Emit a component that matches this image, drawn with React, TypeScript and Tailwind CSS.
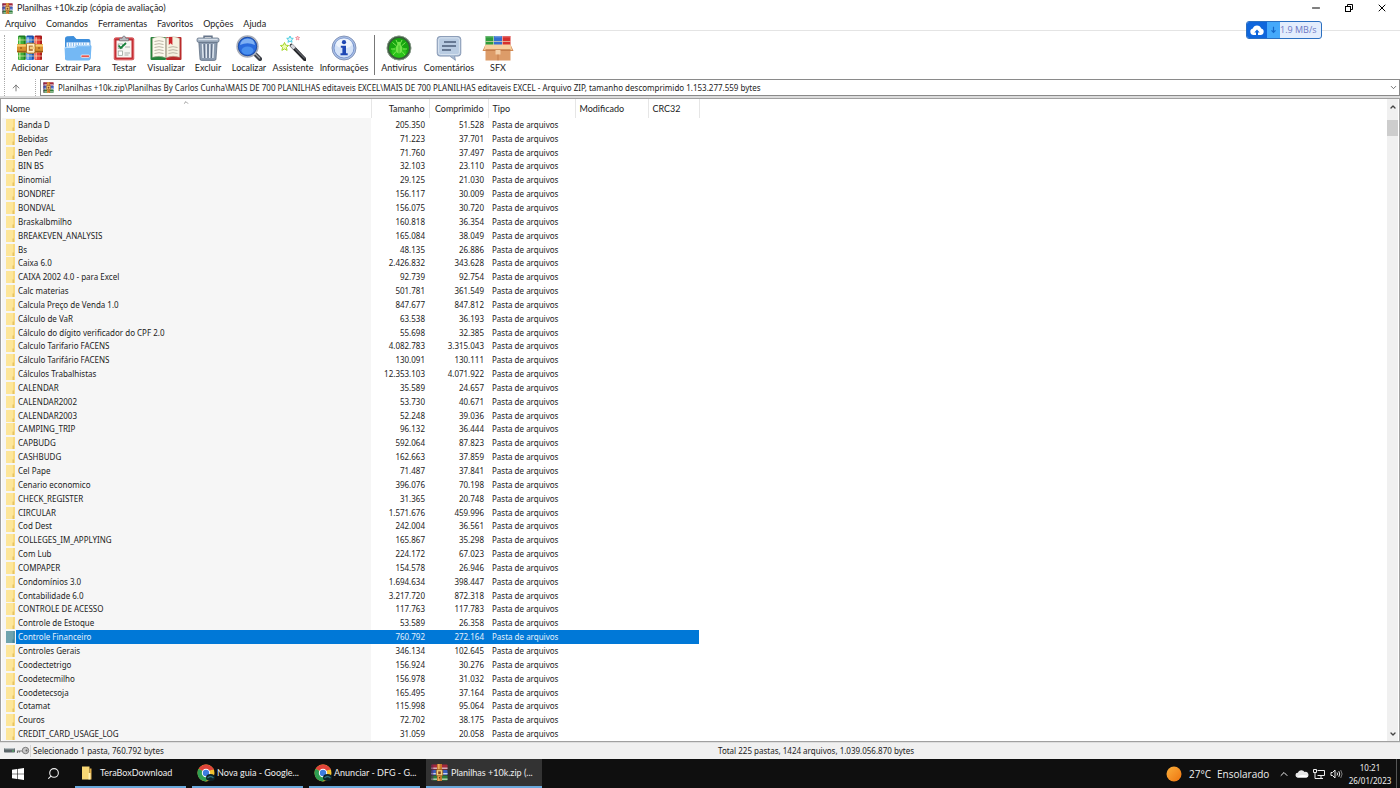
import React from "react";
import { ArrowUp, ChevronDown, ChevronUp, Minus, Search, X } from "lucide-react";

type Row = [string, string, string];

const rows: Row[] = [
  ["Banda D", "205.350", "51.528"],
  ["Bebidas", "71.223", "37.701"],
  ["Ben Pedr", "71.760", "37.497"],
  ["BIN BS", "32.103", "23.110"],
  ["Binomial", "29.125", "21.030"],
  ["BONDREF", "156.117", "30.009"],
  ["BONDVAL", "156.075", "30.720"],
  ["Braskalbmilho", "160.818", "36.354"],
  ["BREAKEVEN_ANALYSIS", "165.084", "38.049"],
  ["Bs", "48.135", "26.886"],
  ["Caixa 6.0", "2.426.832", "343.628"],
  ["CAIXA 2002 4.0 - para Excel", "92.739", "92.754"],
  ["Calc materias", "501.781", "361.549"],
  ["Calcula Preço de Venda 1.0", "847.677", "847.812"],
  ["Cálculo de VaR", "63.538", "36.193"],
  ["Cálculo do dígito verificador do CPF 2.0", "55.698", "32.385"],
  ["Calculo Tarifario FACENS", "4.082.783", "3.315.043"],
  ["Cálculo Tarifário FACENS", "130.091", "130.111"],
  ["Cálculos Trabalhistas", "12.353.103", "4.071.922"],
  ["CALENDAR", "35.589", "24.657"],
  ["CALENDAR2002", "53.730", "40.671"],
  ["CALENDAR2003", "52.248", "39.036"],
  ["CAMPING_TRIP", "96.132", "36.444"],
  ["CAPBUDG", "592.064", "87.823"],
  ["CASHBUDG", "162.663", "37.859"],
  ["Cel Pape", "71.487", "37.841"],
  ["Cenario economico", "396.076", "70.198"],
  ["CHECK_REGISTER", "31.365", "20.748"],
  ["CIRCULAR", "1.571.676", "459.996"],
  ["Cod Dest", "242.004", "36.561"],
  ["COLLEGES_IM_APPLYING", "165.867", "35.298"],
  ["Com Lub", "224.172", "67.023"],
  ["COMPAPER", "154.578", "26.946"],
  ["Condomínios 3.0", "1.694.634", "398.447"],
  ["Contabilidade 6.0", "3.217.720", "872.318"],
  ["CONTROLE DE ACESSO", "117.763", "117.783"],
  ["Controle de Estoque", "53.589", "26.358"],
  ["Controle Financeiro", "760.792", "272.164"],
  ["Controles Gerais", "346.134", "102.645"],
  ["Coodectetrigo", "156.924", "30.276"],
  ["Coodetecmilho", "156.978", "31.032"],
  ["Coodetecsoja", "165.495", "37.164"],
  ["Cotamat", "115.998", "95.064"],
  ["Couros", "72.702", "38.175"],
  ["CREDIT_CARD_USAGE_LOG", "31.059", "20.058"],
];

const SELECTED = "Controle Financeiro";

function WinRarIcon({ className }: { className: string }) {
  return (
    <svg viewBox="0 0 18 18" className={className} aria-hidden="true">
      <rect x="0.5" y="0.5" width="17" height="5.4" rx="0.8" fill="#a3283c" />
      <rect x="0.5" y="3.8" width="17" height="1.3" fill="#dcc9d6" />
      <rect x="0.5" y="6.3" width="17" height="5.4" rx="0.8" fill="#3a5fc0" />
      <rect x="0.5" y="9.6" width="17" height="1.3" fill="#cfd9f2" />
      <rect x="0.5" y="12.1" width="17" height="5.4" rx="0.8" fill="#2e7d3a" />
      <rect x="0.5" y="15.4" width="17" height="1.3" fill="#c9e2c5" />
      <rect x="0.5" y="0.5" width="2" height="17" fill="#5b2052" opacity="0.55" />
      <rect x="6.4" y="0" width="5.2" height="18" fill="#c9792b" />
      <rect x="7.6" y="0" width="1.4" height="18" fill="#f0b766" />
      <rect x="5.6" y="6" width="6.8" height="6.4" rx="1" fill="#f4d27a" stroke="#8a4b17" strokeWidth="0.8" />
      <rect x="7.6" y="7.8" width="2.8" height="3" fill="#8a3f1d" />
      <circle cx="9" cy="14.6" r="0.8" fill="#5a2b0d" />
    </svg>
  );
}

function BooksIcon() {
  const books = [
    ["#3fae3a", "#1d7a25", "#8fe07c"],
    ["#3f86e0", "#1c4fa8", "#9cc8fa"],
    ["#e3403a", "#a81a1c", "#f79a8c"],
  ];
  return (
    <svg viewBox="0 0 26 26" className="size-[26px]" aria-hidden="true">
      {books.map(([main, dark, light], i) => (
        <g key={main}>
          <rect x={1 + i * 8.2} y="1" width="7.6" height="24" rx="1" fill={main} />
          <rect x={6.8 + i * 8.2} y="1.5" width="1.8" height="23" fill={dark} />
          <rect x={2 + i * 8.2} y="1.5" width="1.6" height="23" fill={light} />
          <rect x={1.4 + i * 8.2} y="0.4" width="7" height="1.8" rx="0.8" fill={dark} />
          <rect x={1 + i * 8.2} y="4.5" width="7.6" height="1" fill="#f1e7b4" opacity="0.7" />
          <rect x={1 + i * 8.2} y="20.5" width="7.6" height="1" fill="#f1e7b4" opacity="0.7" />
        </g>
      ))}
      <rect x="0" y="9" width="26" height="8.4" rx="0.8" fill="#d9912e" />
      <rect x="0" y="9.6" width="26" height="2" fill="#f8cf72" />
      <rect x="0" y="15.8" width="26" height="1.4" fill="#9c5a14" />
      <rect x="9.4" y="8.2" width="8.6" height="10" rx="1.4" fill="#fff1c4" stroke="#a86a1c" strokeWidth="1" />
      <rect x="11.8" y="10.6" width="4" height="5.2" fill="#b06a28" />
      <rect x="12.8" y="11.6" width="4.8" height="2.6" fill="#f3ce85" />
      <circle cx="4" cy="13" r="0.8" fill="#7a430e" />
      <circle cx="22" cy="13" r="0.8" fill="#7a430e" />
    </svg>
  );
}

function ExtractIcon() {
  return (
    <svg viewBox="0 0 28 26" className="h-[26px] w-[28px]" aria-hidden="true">
      <path d="M1 23V3.6Q1 1.4 3.2 1.2L9.6 1l2.8 3h12q2 0 2 2v17q0 2-2 2H3q-2 0-2-2z" fill="#3e8fdc" />
      <path d="M2.500 7.400h23v8h-23z" fill="#f3f9ff" />
      <path d="M4.500 7.400v4M7 7.400v4M9.500 7.400v4M12 7.400v4M14.500 7.400v4M17 7.400v4M19.500 7.400v4M22 7.400v4" stroke="#7db6ec" strokeWidth="0.9" />
      <path d="M0.600 13.200q0-1.400 1.400-1.400h8.600l2.400-1.800h13q1.500 0 1.500 1.500L26.600 23.500q-.2 1.900-2.200 1.900H3.200q-2 0-2.100-1.900z" fill="#74b8f4" />
      <path d="M1.200 13.500q0-1 1-1h8.700l2.400-1.800h12.500" fill="none" stroke="#c3e2fc" strokeWidth="1" />
      <rect x="17" y="20" width="8.500" height="2.400" rx="1" fill="#e5483f" stroke="#fff" strokeWidth="0.7" />
    </svg>
  );
}

function TestIcon() {
  return (
    <svg viewBox="0 0 22 26" className="h-[26px] w-[22px]" aria-hidden="true">
      <rect x="0.800" y="2.500" width="20.400" height="22.700" rx="2" fill="#c22f35" />
      <rect x="1.500" y="3" width="19" height="21.500" rx="1.500" fill="none" stroke="#e87778" strokeWidth="0.700" />
      <rect x="3.500" y="5.500" width="15" height="17" fill="#f6f6f2" />
      <path d="M6.500 5.800V3.200h2.700q.4-2.200 1.800-2.200t1.800 2.200h2.700v2.600z" fill="#b9bcc0" stroke="#6c6f75" strokeWidth="0.700" />
      <rect x="5.200" y="9" width="4.300" height="4.300" fill="#fff" stroke="#8b9990" strokeWidth="0.700" />
      <rect x="5.200" y="16" width="4.300" height="4.300" fill="#fff" stroke="#8b9990" strokeWidth="0.700" />
      <path d="M5.600 10.500l2.200 2.400L13 8" fill="none" stroke="#16803a" strokeWidth="1.800" />
      <path d="M12 12h5M11.500 18h5.500M11.500 20h4" stroke="#a5a9a5" strokeWidth="0.900" />
    </svg>
  );
}

function ViewIcon() {
  return (
    <svg viewBox="0 0 32 26" className="h-[26px] w-[32px]" aria-hidden="true">
      <rect x="0.500" y="2" width="15.500" height="23" rx="1" fill="#27833b" />
      <rect x="16" y="2" width="15.500" height="23" rx="1" fill="#b92b2b" />
      <path d="M2.500 3.500Q9-.2 16 3.500v19.200Q9 20 2.500 22.200z" fill="#fbf8ec" stroke="#b8b29c" strokeWidth="0.500" />
      <path d="M29.500 3.500Q23-.2 16 3.500v19.200q7-2.700 13.500-.5z" fill="#f5f1df" stroke="#b8b29c" strokeWidth="0.500" />
      <path d="M4.500 6.500q4.500-1.600 9 0M4.500 9.500q4.500-1.600 9 0M4.500 12.500q4.500-1.600 9 0M4.500 15.500q4.500-1.600 9 0M4.500 18.500q4.500-1.600 9 0M18.500 12.500q4.500-1.600 9 0M18.500 15.500q4.500-1.600 9 0M18.500 18.500q4.500-1.600 9 0" fill="none" stroke="#b3ae9c" strokeWidth="0.900" />
      <path d="M18.800 2h3.600v8l-1.800-1.800L18.800 10z" fill="#cc2429" />
      <path d="M16 3.500v19" stroke="#8f8a76" strokeWidth="0.900" />
    </svg>
  );
}

function TrashIcon() {
  return (
    <svg viewBox="0 0 24 26" className="h-[26px] w-[24px]" aria-hidden="true">
      <path d="M8 3.500V1.200h8v2.300" fill="none" stroke="#66758a" strokeWidth="1.400" />
      <path d="M2.800 7h18.400L20 24q-.1 1.400-1.500 1.400h-13Q4.100 25.400 4 24z" fill="#8a9aae" stroke="#56657a" strokeWidth="0.700" />
      <path d="M6.500 9l.6 14M10.200 9l.2 14M13.800 9l-.2 14M17.500 9l-.6 14" stroke="#e4ebf3" strokeWidth="1.400" />
      <path d="M8.200 9l.4 14M12 9v14M15.800 9l-.4 14" stroke="#52617a" strokeWidth="0.800" />
      <rect x="1" y="3" width="22" height="4.200" rx="1.500" fill="#a7b5c6" stroke="#56657a" strokeWidth="0.700" />
      <rect x="2.500" y="3.800" width="19" height="1" fill="#e6edf5" />
    </svg>
  );
}

function FindIcon() {
  return (
    <svg viewBox="0 0 26 26" className="size-[26px]" aria-hidden="true">
      <path d="M18.500 18.500l5.500 5.500" stroke="#3c3f46" strokeWidth="4.200" strokeLinecap="round" />
      <path d="M18.500 18l5 5" stroke="#9b9fa8" strokeWidth="1.200" strokeLinecap="round" />
      <circle cx="11.500" cy="11.500" r="10.300" fill="#1e5fd0" stroke="#a8adb8" strokeWidth="1.800" />
      <circle cx="11.500" cy="11.500" r="9.200" fill="#2a6bdd" stroke="#173f91" strokeWidth="0.700" />
      <ellipse cx="11.500" cy="15.500" rx="6" ry="4" fill="#57a0f6" opacity="0.700" />
      <path d="M4 10Q5 3.800 11.500 3.600T19 10Q11.500 6.500 4 10z" fill="#8dbcf7" opacity="0.850" />
    </svg>
  );
}

function WizardIcon() {
  const star = "M0-4l1.200 2.700 2.900.3-2.200 2 .7 2.900L0 2.400l-2.600 1.500.7-2.900-2.200-2 2.900-.3z";
  return (
    <svg viewBox="0 0 26 26" className="size-[26px]" aria-hidden="true">
      <path d={star} transform="translate(4.500 11.500)" fill="#f0fbb8" stroke="#a6d82c" strokeWidth="1" />
      <path d={star} transform="translate(10 4.200) scale(.8)" fill="#d8f9fc" stroke="#49cbe0" strokeWidth="1.200" />
      <path d={star} transform="translate(17.600 3) scale(.5)" fill="#ffdede" stroke="#ee7d8c" strokeWidth="1.500" />
      <path d="M11.500 10.500L25 24.500" stroke="#26272b" strokeWidth="3.600" strokeLinecap="round" />
      <path d="M12 10.500L25 23.600" stroke="#83868e" strokeWidth="1" />
      <path d="M11.200 10l3.300 3.400" stroke="#d4d6dc" strokeWidth="3.200" />
    </svg>
  );
}

function InfoIcon() {
  return (
    <svg viewBox="0 0 26 26" className="size-[26px]" aria-hidden="true">
      <circle cx="13" cy="13" r="12" fill="#a9bfe6" stroke="#7587ac" strokeWidth="0.800" />
      <circle cx="13" cy="13" r="10" fill="#d5e3f8" stroke="#5b7cc0" strokeWidth="0.700" />
      <ellipse cx="13" cy="8.500" rx="8" ry="5" fill="#fff" opacity="0.600" />
      <circle cx="13" cy="7.200" r="2.100" fill="#1e47b4" />
      <path d="M9.800 10.800h5.200v7.400h1.700v2H9.500v-2h1.900v-5.400H9.800z" fill="#1e47b4" />
    </svg>
  );
}

function VirusIcon() {
  return (
    <svg viewBox="0 0 26 26" className="size-[26px]" aria-hidden="true">
      <circle cx="13" cy="13" r="12.200" fill="#3c5a3f" />
      <circle cx="13" cy="13" r="12" fill="none" stroke="#92a592" strokeWidth="0.800" />
      <circle cx="13" cy="13" r="10" fill="#17a50f" />
      <ellipse cx="13" cy="17" rx="7.500" ry="5.500" fill="#37d61f" opacity="0.600" />
      <g stroke="#7fe855" strokeWidth="1" fill="none">
        <path d="M10 10.500L6.500 7.500M16 10.500l3.500-3M9 14H5M17 14h4M10 16.500L7 20M16 16.500l3 3.500M11.500 8L10 5M14.500 8L16 5" />
      </g>
      <ellipse cx="13" cy="14" rx="3.300" ry="4.400" fill="#74e34c" />
      <circle cx="13" cy="8.800" r="2" fill="#74e34c" />
      <path d="M13 10.500v8" stroke="#2cae1c" strokeWidth="0.700" />
    </svg>
  );
}

function CommentIcon() {
  return (
    <svg viewBox="0 0 26 26" className="size-[26px]" aria-hidden="true">
      <path d="M4 1.500h18q2.800 0 2.800 2.800v14q0 2.800-2.800 2.800h-3.400l.8 4.200-5.600-4.200H4q-2.800 0-2.800-2.800v-14Q1.200 1.500 4 1.500z" fill="#a5b8d0" stroke="#8496b2" strokeWidth="0.900" />
      <rect x="2.600" y="2.800" width="20.800" height="16.800" rx="2" fill="#b9cce2" stroke="#dfe9f4" strokeWidth="0.900" />
      <path d="M8 7h12M6 11h14M6 15h9" stroke="#4c5d7a" strokeWidth="1.300" />
    </svg>
  );
}

function SfxIcon() {
  return (
    <svg viewBox="0 0 32 26" className="h-[26px] w-[32px]" aria-hidden="true">
      <rect x="3.500" y="1" width="8" height="11" fill="#2f9c3b" />
      <rect x="12" y="1" width="8" height="11" fill="#346fd0" />
      <rect x="20.500" y="1" width="8" height="11" fill="#d5302e" />
      <path d="M4 1.800h7M12.500 1.800h7M21 1.800h7" stroke="#fff" strokeWidth="0.800" opacity="0.500" />
      <path d="M3.500 6.500h25" stroke="#e8d9b5" strokeWidth="1" opacity="0.700" />
      <path d="M3.500 9.500L.5 16h3.500zM28.500 9.500l3 6.500H28z" fill="#d18a54" />
      <path d="M3.500 9.500h25L30 15H2z" fill="#f7cf9f" />
      <rect x="3.500" y="14.500" width="25" height="11" fill="#dd9c69" />
      <rect x="3.500" y="14.500" width="25" height="1.200" fill="#b9713f" />
      <path d="M13.500 15v4.500h5V15z" fill="#f3cfa8" />
      <path d="M16 19.500v6" stroke="#b9713f" strokeWidth="0.700" />
    </svg>
  );
}

function FolderIcon({ selected }: { selected: boolean }) {
  return (
    <svg viewBox="0 0 9 12" className="h-3 w-[9px] shrink-0" aria-hidden="true">
      <rect width="9" height="12" fill={selected ? "#6fa3ad" : "#fde69a"} />
      <path d="M7 0h2v12H7z" fill={selected ? "#5d97a8" : "#f9da80"} />
      <path d="M6.500 8.500H8V12H6.500z" fill={selected ? "#4c8496" : "#e6c263"} />
    </svg>
  );
}

function ChromeIcon() {
  return (
    <svg viewBox="0 0 18 18" className="size-[18px] shrink-0" aria-hidden="true">
      <circle cx="9" cy="9" r="8.500" fill="#f2c230" />
      <path d="M9 9L1.640 4.750A8.500 8.500 0 0 1 16.360 4.750z" fill="#e0443a" />
      <path d="M9 9L1.640 4.750A8.500 8.500 0 0 0 9 17.500l3-5z" fill="#2f9e52" />
      <path d="M9 5h7.500" stroke="#e0443a" strokeWidth="1.500" />
      <circle cx="9" cy="9" r="4.200" fill="#fff" />
      <circle cx="9" cy="9" r="3.200" fill="#3e7de0" />
      <ellipse cx="13.500" cy="13.500" rx="4.500" ry="3.500" fill="#0d2328" />
      <path d="M10.500 14q3-3 6 0" fill="none" stroke="#2f6f7a" strokeWidth="1.200" />
    </svg>
  );
}

const tools: { label: string; width: string; icon: React.ReactNode }[] = [
  { label: "Adicionar", width: "w-11", icon: <BooksIcon /> },
  { label: "Extrair Para", width: "w-[52px]", icon: <ExtractIcon /> },
  { label: "Testar", width: "w-10", icon: <TestIcon /> },
  { label: "Visualizar", width: "w-11", icon: <ViewIcon /> },
  { label: "Excluir", width: "w-10", icon: <TrashIcon /> },
  { label: "Localizar", width: "w-[42px]", icon: <FindIcon /> },
  { label: "Assistente", width: "w-[46px]", icon: <WizardIcon /> },
  { label: "Informações", width: "w-14", icon: <InfoIcon /> },
];

const extraTools: typeof tools = [
  { label: "Antivírus", width: "w-[46px]", icon: <VirusIcon /> },
  { label: "Comentários", width: "w-[54px]", icon: <CommentIcon /> },
  { label: "SFX", width: "w-11", icon: <SfxIcon /> },
];

function ToolButton({ label, width, icon }: (typeof tools)[number]) {
  return (
    <button type="button" className={`flex ${width} flex-col items-center whitespace-nowrap`}>
      {icon}
      <span className="leading-[14px]">{label}</span>
    </button>
  );
}

function TitleBar() {
  return (
    <header className="flex h-4 items-center pl-[2px]">
      <WinRarIcon className="size-[11px]" />
      <h1 className="ml-1">Planilhas +10k.zip (cópia de avaliação)</h1>
      <div className="ml-auto flex items-center gap-[21px] pr-3 text-black">
        <button type="button" aria-label="Minimizar">
          <Minus className="size-3" strokeWidth={2} />
        </button>
        <button type="button" aria-label="Restaurar">
          <svg viewBox="0 0 12 12" className="size-3" fill="none" stroke="currentColor" aria-hidden="true">
            <rect x="2.500" y="4.500" width="5" height="5" />
            <path d="M4.500 4.500v-2h5v5h-2" />
          </svg>
        </button>
        <button type="button" aria-label="Fechar">
          <X className="size-3" strokeWidth={2} />
        </button>
      </div>
    </header>
  );
}

function SpeedBadge() {
  return (
    <div className="absolute top-[21px] right-[78px] flex h-[18px] w-[76px] overflow-hidden rounded-[3px] border border-[#2b6fc0] bg-[#e3edfd] font-['Open_Sans',sans-serif]">
      <span className="flex w-5 items-center justify-center bg-[#0f66dc]">
        <svg viewBox="0 0 14 12" className="h-3 w-[14px]" aria-hidden="true">
          <path d="M3.500 11A3.300 3.300 0 0 1 2.800 4.500 4.400 4.400 0 0 1 11.200 4.500 3.300 3.300 0 0 1 10.500 11z" fill="#fff" />
          <path d="M7 5.500l2.700 2.900H8V12H6V8.400H4.300z" fill="#0f66dc" />
        </svg>
      </span>
      <span className="flex w-[13px] items-center justify-center bg-[#45a9fb]">
        <svg viewBox="0 0 8 10" className="h-2 w-[7px]" aria-hidden="true">
          <path d="M4 1v7M1.500 5.500L4 8l2.500-2.500" fill="none" stroke="#1668c9" strokeWidth="1.500" />
        </svg>
      </span>
      <span className="flex items-center text-[9px] text-[#6d78c4]">1.9 MB/s</span>
    </div>
  );
}

function FileTable() {
  return (
    <table className="h-full w-[697px] table-fixed border-collapse text-left leading-3">
      <colgroup>
        <col className="w-[369px]" />
        <col className="w-[58px]" />
        <col className="w-[59px]" />
        <col className="w-[87px]" />
        <col className="w-[73px]" />
        <col className="w-[51px]" />
      </colgroup>
      <thead>
        <tr className="h-[19px] *:border-r *:border-[#e6e6e6] *:p-0 *:font-normal">
          <th scope="col" className="relative">
            <span className="pl-1">Nome</span>
            <ChevronUp className="absolute top-0 left-1/2 size-[7px] -translate-x-1/2 text-[#555]" strokeWidth={2} />
          </th>
          <th scope="col" className="text-right">
            <span className="pr-1">Tamanho</span>
          </th>
          <th scope="col" className="text-right">
            <span className="pr-1">Comprimido</span>
          </th>
          <th scope="col">
            <span className="pl-1">Tipo</span>
          </th>
          <th scope="col">
            <span className="pl-1">Modificado</span>
          </th>
          <th scope="col">
            <span className="pl-1">CRC32</span>
          </th>
        </tr>
      </thead>
      <tbody className="font-['Noto_Sans',sans-serif] text-[8px]">
        {rows.map(([name, size, packed]) => {
          const selected = name === SELECTED;
          return (
            <tr
              key={name}
              aria-selected={selected}
              className={
                selected
                  ? "bg-[#0078d7] text-[#e4f1fc] *:p-0 *:first:bg-linear-to-r *:first:from-[#f6f6f6] *:first:from-[14px] *:first:to-[#0078d7] *:first:to-[14px]"
                  : "*:p-0 *:first:bg-[#f6f6f6]"
              }
            >
              <td>
                <div className="flex items-center">
                  <span className="pl-1">
                    <FolderIcon selected={selected} />
                  </span>
                  <span className="pl-[3px] whitespace-nowrap">{name}</span>
                </div>
              </td>
              <td className="text-right">
                <span className="pr-1">{size}</span>
              </td>
              <td className="text-right">
                <span className="pr-1">{packed}</span>
              </td>
              <td>
                <span className="pl-1">Pasta de arquivos</span>
              </td>
              <td />
              <td />
            </tr>
          );
        })}
      </tbody>
    </table>
  );
}

function TaskButton({ label, icon, active }: { label: string; icon: React.ReactNode; active?: boolean }) {
  return (
    <button
      type="button"
      className={`flex items-center gap-[2px] border-b-2 border-[#6aa9dc] pl-[5px] whitespace-nowrap ${active ? "w-[116px] bg-[#333333]" : "w-[111px]"}`}
    >
      {icon}
      <span>{label}</span>
    </button>
  );
}

function Taskbar() {
  return (
    <footer className="flex h-[29px] shrink-0 bg-[#0f0f0f] text-[#eeeeee]">
      <button type="button" aria-label="Iniciar" className="flex w-[35px] items-center justify-center">
        <svg viewBox="0 0 12 12" className="size-3" fill="#fff" aria-hidden="true">
          <path d="M0 1.700l5-.7v4.700H0zM5.600.9L12 0v5.700H5.600zM0 6.300h5V11l-5-.7zM5.600 6.300H12V12l-6.400-.9z" />
        </svg>
      </button>
      <button type="button" aria-label="Pesquisar" className="flex w-10 items-center pl-3">
        <Search className="size-[13px] -scale-x-100" strokeWidth={2} />
      </button>
      <div className="flex gap-[6px]">
        <TaskButton
          label="TeraBoxDownload"
          icon={
            <svg viewBox="0 0 18 16" className="h-4 w-[18px] shrink-0" aria-hidden="true">
              <path d="M2 1.500h7.500v13H2z" fill="#f7d774" />
              <path d="M9.500 3.500h2v11h-2z" fill="#e3b04a" />
              <path d="M8.500 8h2v6.500h-2z" fill="#fff0b3" />
            </svg>
          }
        />
        <TaskButton label="Nova guia - Google..." icon={<ChromeIcon />} />
        <TaskButton label="Anunciar - DFG - G..." icon={<ChromeIcon />} />
        <TaskButton active label="Planilhas +10k.zip (..." icon={<WinRarIcon className="mr-px size-[17px]" />} />
      </div>
      <div className="ml-auto flex items-center">
        <svg viewBox="0 0 16 16" className="size-4" aria-hidden="true">
          <defs>
            <linearGradient id="sun" x1="0" y1="0" x2="1" y2="1">
              <stop offset="0" stopColor="#fbb03b" />
              <stop offset="1" stopColor="#ee7410" />
            </linearGradient>
          </defs>
          <circle cx="8" cy="8" r="7.500" fill="url(#sun)" />
        </svg>
        <span className="ml-[7px] font-['Open_Sans',sans-serif] text-[10px]">27°C</span>
        <span className="ml-[6px] w-[61px] font-['Open_Sans',sans-serif] text-[10px]">Ensolarado</span>
        <ChevronUp className="size-3" strokeWidth={2} />
        <svg viewBox="0 0 14 10" className="ml-[5px] h-[10px] w-[14px]" aria-hidden="true">
          <path d="M3 8.500a2.400 2.400 0 0 1-.2-4.800 3.800 3.800 0 0 1 6.800-.6 2.700 2.700 0 0 1 1.900 5.400z" fill="#e6e6e6" />
          <path d="M2 8.500q3-4 11-1.500-.5 1.500-2 1.500z" fill="#fff" />
        </svg>
        <svg viewBox="0 0 12 12" className="ml-1 size-3" fill="none" stroke="#eee" aria-hidden="true">
          <path d="M4.500 2.500h7v5h-7M8 7.500v3M5 10.500h5M.5 1.500h3v3h-3zM2 4.500v6h3" />
        </svg>
        <svg viewBox="0 0 14 12" className="ml-[5px] h-3 w-[14px]" fill="none" stroke="#eee" aria-hidden="true">
          <path d="M1 4.500h1.500L5 2v8L2.500 7.500H1z" />
          <path d="M7 4.500q1 1.500 0 3M8.800 3.200q1.900 2.800 0 5.600" />
          <path d="M10.700 2q2.800 4 0 8" opacity="0.500" />
        </svg>
        <div className="ml-1 w-11 text-center font-['Noto_Sans',sans-serif] text-[8px] leading-[13px]">
          <div>10:21</div>
          <div>26/01/2023</div>
        </div>
        <span className="ml-1 h-full w-1 border-l border-[#555]" />
      </div>
    </footer>
  );
}

export default function App() {
  return (
    <div className="relative flex h-screen min-h-[780px] flex-col overflow-hidden bg-white font-['Lato','Open_Sans',sans-serif] text-[9px] leading-3 text-[#1c1c1c]">
      <TitleBar />
      <SpeedBadge />
      <nav className="flex h-[15px] items-end gap-[10px] border-b border-[#e4e4e4] pl-[5px]">
        {["Arquivo", "Comandos", "Ferramentas", "Favoritos", "Opções", "Ajuda"].map((item) => (
          <button key={item} type="button">
            {item}
          </button>
        ))}
      </nav>
      <div className="flex h-12 pt-1 pl-1">
        <div className="mr-[3px] border-l border-dotted border-[#aaa]" />
        {tools.map((tool) => (
          <ToolButton key={tool.label} {...tool} />
        ))}
        <div className="mr-px mb-1 ml-[2px] border-l border-[#777]" />
        {extraTools.map((tool) => (
          <ToolButton key={tool.label} {...tool} />
        ))}
      </div>
      <div className="flex h-[17px] pl-1">
        <div className="flex w-8 border-x border-dotted border-[#aaa]">
          <button type="button" aria-label="Pasta acima" className="pl-[6px] text-[#666]">
            <ArrowUp className="size-[10px]" strokeWidth={2} />
          </button>
        </div>
        <div className="ml-1 flex flex-1 items-center border border-[#8a8a8a] pl-[2px]">
          <WinRarIcon className="size-[11px] shrink-0" />
          <input
            type="text"
            aria-label="Endereço"
            className="ml-1 h-full min-w-0 flex-1 font-['Noto_Sans',sans-serif] text-[8px] outline-none"
            defaultValue="Planilhas +10k.zip\Planilhas By Carlos Cunha\MAIS DE 700 PLANILHAS editaveis EXCEL\MAIS DE 700 PLANILHAS editaveis EXCEL - Arquivo ZIP, tamanho descomprimido 1.153.277.559 bytes"
          />
          <button type="button" aria-label="Histórico" className="pr-[1px] text-[#444]">
            <ChevronDown className="size-[9px]" strokeWidth={2} />
          </button>
        </div>
      </div>
      <div className="h-[3px] shrink-0 border-b border-[#a0a0a0] bg-[#dcdcdc]" />
      <main className="flex min-h-0 flex-1 border-x border-b border-[#a0a0a0] pl-[1px]">
        <div className="min-w-0 flex-1">
          <FileTable />
        </div>
        <div className="mr-[1px] flex w-[11px] flex-col items-center bg-[#f0f0f0] text-[#444]">
          <button type="button" aria-label="Rolar para cima" className="flex h-[21px] items-start pt-1">
            <ChevronUp className="size-2" strokeWidth={4} />
          </button>
          <div className="h-4 w-full bg-[#cdcdcd]" />
          <button type="button" aria-label="Rolar para baixo" className="mt-auto pb-[3px]">
            <ChevronDown className="size-2" strokeWidth={4} />
          </button>
        </div>
      </main>
      <div className="flex h-[17px] shrink-0 items-center border-t border-[#dedede] bg-[#f0f0f0] pl-1 font-['Noto_Sans',sans-serif] text-[8px]">
        <svg viewBox="0 0 26 10" className="h-[10px] w-[26px]" aria-hidden="true">
          <rect x="0" y="2" width="11" height="4.500" rx="0.800" fill="#5b6569" />
          <rect x="0.500" y="2" width="10" height="1.300" fill="#b6bfc2" />
          <rect x="8" y="4.500" width="2" height="1" fill="#58c26a" />
          <circle cx="21.500" cy="4.500" r="3.200" fill="#c9c9c9" stroke="#777" />
          <circle cx="22.500" cy="4.500" r="1" fill="#666" />
          <path d="M18.500 5H13.500v2M15.500 5v1.500" fill="none" stroke="#777" strokeWidth="1.200" />
        </svg>
        <div className="flex w-[688px] border-l border-[#d4d4d4] pl-[2px]">Selecionado 1 pasta, 760.792 bytes</div>
        <div>Total 225 pastas, 1424 arquivos, 1.039.056.870 bytes</div>
      </div>
      <Taskbar />
    </div>
  );
}
